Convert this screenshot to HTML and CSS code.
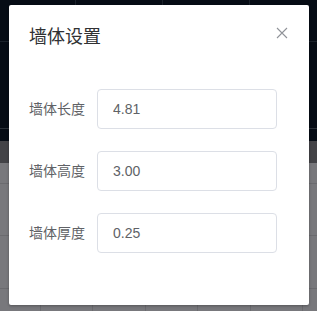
FILE: index.html
```html
<!DOCTYPE html>
<html lang="zh-CN">
<head>
    <meta charset="UTF-8">
    <meta name="viewport" content="width=device-width, initial-scale=1.0">
    <title>墙体设置</title>
    <link rel="stylesheet" href="styles.css">
</head>
<body>

    <div class="page">
        <div class="scene"></div>
        <div class="scene-edge"></div>
        <div class="toolbar"></div>
        <div class="board"></div>
    </div>

    <div class="dialog-wrapper">
        <div class="dialog">
            <div class="dialog-header">
                <span class="dialog-title">墙体设置</span>
                <button class="dialog-close" aria-label="Close">
                    <svg width="12" height="12" viewBox="0 0 12 12">
                        <path d="M1 1 L11 11 M11 1 L1 11" stroke="#909399" stroke-width="1.1" fill="none"/>
                    </svg>
                </button>
            </div>
            <div class="dialog-body">
                <form class="form">
                    <div class="form-item">
                        <label class="form-label">墙体长度</label>
                        <input class="form-input" type="text" value="4.81">
                    </div>
                    <div class="form-item">
                        <label class="form-label">墙体高度</label>
                        <input class="form-input" type="text" value="3.00">
                    </div>
                    <div class="form-item">
                        <label class="form-label">墙体厚度</label>
                        <input class="form-input" type="text" value="0.25">
                    </div>
                </form>
            </div>
        </div>
    </div>

</body>
</html>
```

FILE: styles.css
```css
body {
    margin: 0;
    padding: 0;
    font-family: 'Liberation Sans', 'Noto Sans CJK SC', sans-serif;
    width: 317px;
    height: 311px;
    overflow: hidden;
    position: relative;
}

/* background app, already dimmed by the mask */
.page {
    display: flex;
    flex-direction: column;
    height: 311px;
}

.scene {
    height: 128px;
    background-color: #060c15;
    background-image:
        linear-gradient(90deg, transparent 75px, #1b222b 75px, #1b222b 76px, transparent 76px),
        linear-gradient(90deg, transparent 162px, #1b222b 162px, #1b222b 163px, transparent 163px),
        linear-gradient(90deg, transparent 249px, #1b222b 249px, #1b222b 250px, transparent 250px),
        linear-gradient(180deg, transparent 41px, #1b222b 41px, #1b222b 42px, transparent 42px);
}

.scene-edge {
    height: 12px;
    background-color: #060c15;
    border-top: 1px solid #2a3038;
}

.toolbar {
    height: 22px;
    background-color: #434347;
}

.board {
    flex: 1;
    background-color: #78787c;
    background-image:
        repeating-linear-gradient(90deg, transparent 0, transparent 40px, #6b6b6f 40px, #6b6b6f 41px, transparent 41px, transparent 52.5px),
        linear-gradient(180deg, transparent 20px, #6b6b6f 20px, #6b6b6f 21px, transparent 21px),
        linear-gradient(180deg, transparent 72px, #6b6b6f 72px, #6b6b6f 73px, transparent 73px),
        linear-gradient(180deg, transparent 125px, #6b6b6f 125px, #6b6b6f 126px, transparent 126px);
}

.dialog-wrapper {
    position: absolute;
    top: 5px;
    left: 9px;
}

.dialog {
    width: 300px;
    background-color: #fff;
    border-radius: 2px;
    box-shadow: 0 1px 3px rgba(0, 0, 0, 0.3);
    box-sizing: border-box;
}

.dialog-header {
    padding: 20px 20px 10px;
    position: relative;
}

.dialog-title {
    font-size: 18px;
    line-height: 24px;
    color: #303133;
}

.dialog-close {
    position: absolute;
    top: 22px;
    right: 21px;
    background: none;
    border: none;
    padding: 0;
    width: 12px;
    height: 12px;
    cursor: pointer;
    display: flex;
}

.dialog-body {
    padding: 30px 20px;
}

.form {
    margin: 0;
}

.form-item {
    display: flex;
    align-items: center;
    margin-bottom: 22px;
}

.form-label {
    width: 68px;
    box-sizing: border-box;
    padding-right: 12px;
    text-align: right;
    font-size: 14px;
    line-height: 40px;
    color: #606266;
}

.form-input {
    width: 180px;
    height: 40px;
    box-sizing: border-box;
    border: 1px solid #dcdfe6;
    border-radius: 4px;
    padding: 0 15px;
    font-family: inherit;
    font-size: 14px;
    color: #606266;
    outline: none;
}
```
